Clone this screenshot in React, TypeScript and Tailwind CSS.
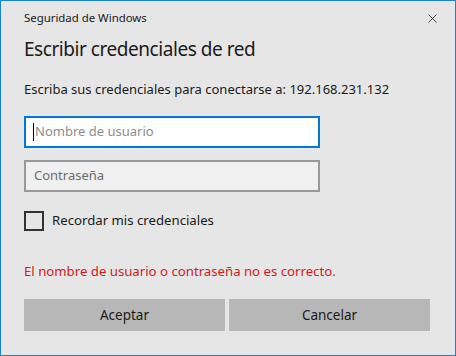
import { X } from "lucide-react";

const font = { fontFamily: '"Segoe UI", "Noto Sans", sans-serif' };

export default function App() {
  return (
    <div
      className="flex h-[356px] w-[456px] flex-col border border-[#1883d7] bg-[#e6e6e6] text-[#1a1a1a]"
      style={font}
    >
      <div className="flex h-[34px] items-center justify-between pl-[23px] pr-[15px]">
        <span className="text-[11.4px]">Seguridad de Windows</span>
        <X className="h-[15px] w-[15px] text-[#222]" strokeWidth={1.3} />
      </div>
      <div className="px-[23px]">
        <h1 className="text-[19px] leading-[28px] tracking-[-0.45px]">Escribir credenciales de red</h1>
        <p className="mt-[17px] text-[13px] leading-[18px]">
          Escriba sus credenciales para conectarse a: 192.168.231.132
        </p>
        <div className="mt-[18px] flex h-[32px] w-[296px] items-center border-2 border-[#0078d7] bg-white pl-[7px] text-[13px] text-[#8c8c8c]">
          <span className="mr-px h-[18px] w-px bg-black" />
          Nombre de usuario
        </div>
        <div className="mt-[12px] flex h-[32px] w-[296px] items-center border-2 border-[#999] bg-[#f0f0f0] pl-[8px] text-[13px] text-[#6d6d6d]">
          Contraseña
        </div>
        <label className="mt-[19px] flex items-center gap-[8px] text-[13.2px]">
          <span className="h-[20px] w-[20px] border-2 border-[#333]" />
          Recordar mis credenciales
        </label>
        <p className="mt-[31px] text-[13.2px] text-[#d01a1a]">
          El nombre de usuario o contraseña no es correcto.
        </p>
        <div className="mt-[17px] flex gap-[4px]">
          <button className="h-[32px] w-[201px] bg-[#b7b7b7] text-[13.5px]">Aceptar</button>
          <button className="h-[32px] w-[201px] bg-[#b7b7b7] text-[13.5px]">Cancelar</button>
        </div>
      </div>
    </div>
  );
}
